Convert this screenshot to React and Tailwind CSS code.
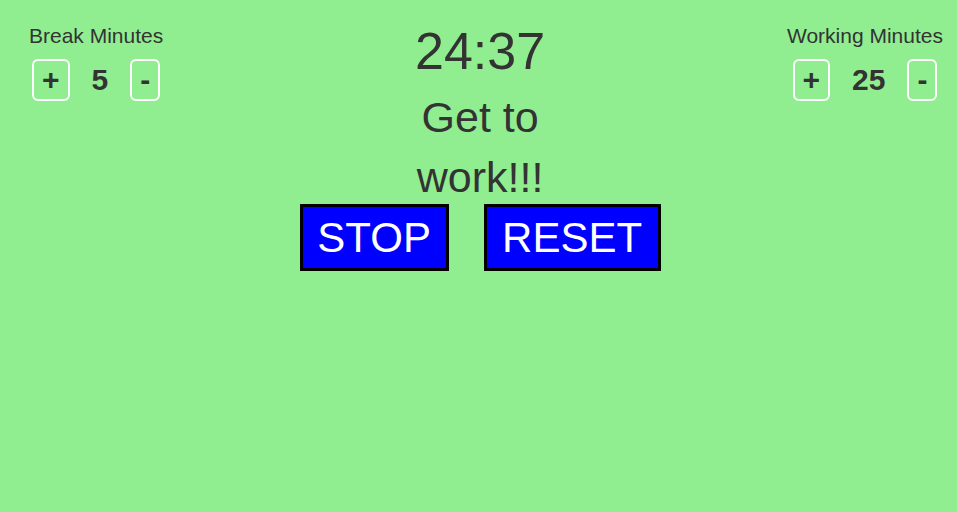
import React, { useState } from "react";

const Counter = ({ label, value, onInc, onDec }) => (
  <div className="flex flex-col items-center pt-[24px]">
    <div className="text-[21px] leading-[24px] whitespace-nowrap">{label}</div>
    <div className="mt-[11px] flex items-center gap-[22px]">
      <button
        onClick={onInc}
        className="rounded-[6px] border-2 border-white px-[8px] py-[2px] text-[30px] font-bold leading-[34px]"
      >
        +
      </button>
      <span className="text-[30px] font-bold leading-[34px]">{value}</span>
      <button
        onClick={onDec}
        className="rounded-[6px] border-2 border-white px-[8px] py-[2px] text-[30px] font-bold leading-[34px]"
      >
        -
      </button>
    </div>
  </div>
);

const App = () => {
  const [breakMin, setBreakMin] = useState(5);
  const [workMin, setWorkMin] = useState(25);

  return (
    <div className="min-h-screen w-full bg-[#90ee90] font-['Liberation_Sans',Arial,sans-serif] text-[#333333]">
      <div className="flex items-start pl-[29px] pr-[14px]">
        {/* Break */}
        <Counter
          label="Break Minutes"
          value={breakMin}
          onInc={() => setBreakMin(breakMin + 1)}
          onDec={() => setBreakMin(Math.max(1, breakMin - 1))}
        />

        {/* Timer */}
        <div className="flex flex-1 flex-col items-center pl-[10px] pt-[21px]">
          <div className="text-[52px] leading-[60px]">24:37</div>
          <div className="mt-[6px] w-[200px] text-center text-[43px] leading-[60px]">
            Get to work!!!
          </div>
          <div className="mt-[-3px] flex gap-[35px]">
            <button className="flex h-[67px] w-[149px] flex-none items-center justify-center border-[3px] border-black bg-[#0000ff] text-[42px] text-white">
              STOP
            </button>
            <button className="flex h-[67px] w-[177px] flex-none items-center justify-center border-[3px] border-black bg-[#0000ff] text-[42px] text-white">
              RESET
            </button>
          </div>
        </div>

        {/* Work */}
        <Counter
          label="Working Minutes"
          value={workMin}
          onInc={() => setWorkMin(workMin + 1)}
          onDec={() => setWorkMin(Math.max(1, workMin - 1))}
        />
      </div>
    </div>
  );
};

export default App;
